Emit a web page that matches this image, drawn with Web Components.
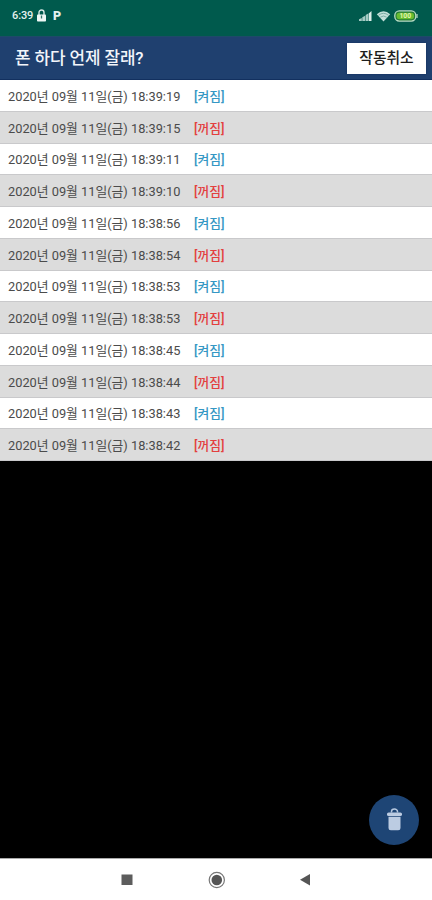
<!DOCTYPE html>
<html lang="ko">
<head>
<meta charset="utf-8">
<title>폰 하다 언제 잘래?</title>
<style>
html,body{margin:0;height:100%;background:#000;overflow:hidden}
body{font-family:Roboto,"Noto Sans CJK KR",sans-serif}
</style>
</head>
<body>
<phone-screen></phone-screen>
<script>
const define=(name,html,init)=>customElements.define(name,class extends HTMLElement{
  constructor(){
    super();
    const t=document.createElement('template');
    t.innerHTML=html;
    this.attachShadow({mode:'open'}).append(t.content.cloneNode(true));
  }
  connectedCallback(){if(init)init(this);}
});

define('status-bar',`<style>
:host{display:flex;align-items:center;height:36px;box-sizing:border-box;padding:0 14px 5px 12px;background:#005a4d;color:#e4f1ee;font-size:11px;font-weight:500}
.time{letter-spacing:-.1px;width:22px;white-space:nowrap}
.lock{margin-left:2px}.p{margin-left:6px;font-weight:900;font-size:12.5px}
.right{margin-left:auto;display:flex;align-items:center}
svg{display:block}
</style>
<span class="time">6:39</span>
<svg class="lock" width="11" height="13" viewBox="0 0 11 13"><path d="M3 6V3.500a2.500 2.500 0 0 1 5 0V6" fill="none" stroke="#d5e8e4" stroke-width="1.400"/><rect x="1" y="5.500" width="9" height="7" rx=".8" fill="#eef7f5"/><path d="M5.500 6.500v3" stroke="#34786d" stroke-width="1.300"/></svg>
<span class="p">P</span>
<div class="right">
<svg width="15" height="12" viewBox="0 0 15 12"><path d="M1 11V9.300L3.800 8v3zM4.300 11V7.300L7.200 5.800V11zM7.700 11V5L10.600 3.300V11z" fill="#a5cbc4"/><path d="M11 11V3.200L13.500 1v10z" fill="#dceeea"/></svg>
<svg style="margin-left:3px" width="15" height="12" viewBox="0 0 15 12"><path d="M.8 4.200Q7.500-1.600 14.200 4.200L7.500 11.500z" fill="#c3e0da"/><path d="M2.500 5.300Q7.500 1.300 12.500 5.300M4.300 7.200Q7.500 4.800 10.700 7.200" fill="none" stroke="#5d988e" stroke-width=".7"/></svg>
<svg style="margin-left:3px" width="24" height="12" viewBox="0 0 24 12"><rect x=".8" y=".9" width="21" height="10.200" rx="4.500" fill="#237a35" stroke="#b9dcc5" stroke-width="1.300"/><rect x="2.600" y="2.700" width="17.400" height="6.600" rx="2.800" fill="#69bd31"/><path d="M23 4v4" stroke="#b9dcc5" stroke-width="1.200"/><text x="11.300" y="8.400" font-size="6.800" font-weight="700" text-anchor="middle" fill="#e4f6ae">100</text></svg>
</div>`);

define('app-bar',`<style>
:host{display:flex;align-items:center;justify-content:space-between;height:44px;box-sizing:border-box;padding:0 6px 0 15px;background:#1f406f;border-top:1px solid #1d4a68;border-bottom:1px solid #12305f;color:#f2f5fa;font-size:16.900px;font-weight:500}
.title{white-space:nowrap;letter-spacing:-.1px;line-height:24px}
</style><div class="title"><slot></slot></div><slot name="action"></slot>`);

define('cancel-button',`<style>
:host{display:block}
button{display:block;width:79px;height:31px;margin:0;padding:0;border:0;background:#fff;color:#1d1d1d;font:500 14.800px/31px Roboto,"Noto Sans CJK KR",sans-serif;box-shadow:0 0 2px #102d5a;white-space:nowrap}
</style><button><slot></slot></button>`);

define('log-row',`<style>
:host{display:flex;align-items:center;flex:1;min-height:0;box-sizing:border-box;padding:3px 0 0 8px;background:#fff;border-bottom:1px solid #c9c9cb;color:#4b4b4b;font-size:12.800px;line-height:18px;white-space:nowrap}
:host([state="off"]){background:#dcdcdc}
.date{width:186px}
.state{color:#3597c4;font-weight:500}
:host([state="off"]) .state{color:#e3403f}
</style><span class="date"></span><span class="state"></span>`,el=>{
  el.shadowRoot.querySelector('.date').textContent='2020년 09월 11일(금) '+el.getAttribute('time');
  el.shadowRoot.querySelector('.state').textContent=el.getAttribute('state')==='off'?'[꺼짐]':'[켜짐]';
});

define('log-list',`<style>:host{display:flex;flex-direction:column;height:381px}</style><slot></slot>`,el=>{
  ['18:39:19','18:39:15','18:39:11','18:39:10','18:38:56','18:38:54','18:38:53','18:38:53','18:38:45','18:38:44','18:38:43','18:38:42'].forEach((t,i)=>{
    const r=document.createElement('log-row');
    r.setAttribute('time',t);
    r.setAttribute('state',i%2?'off':'on');
    el.append(r);
  });
});

define('delete-fab',`<style>
:host{position:absolute;right:13px;bottom:55px;width:50px;height:50px;border-radius:50%;background:#1e4575;display:flex;align-items:center;justify-content:center}
svg{display:block}
</style><svg width="18" height="24" viewBox="0 0 18 24"><path d="M6.500 4.500V3.500a3 2.500 0 0 1 6 0v1" fill="none" stroke="#b5c7df" stroke-width="1.500"/><rect x="2" y="4.500" width="15" height="3.500" rx="1.600" fill="#bccce2"/><path d="M3.500 8.700h12v11.300q0 2.300-2.300 2.300H5.800Q3.500 22.300 3.500 20z" fill="#bccce2"/></svg>`);

define('nav-bar',`<style>
:host{display:block;height:42px;box-sizing:border-box;border-top:1px solid #aaa;background:#fff}
svg{display:block}
</style><svg width="432" height="41" viewBox="0 859 432 41"><rect x="121.500" y="874.500" width="11" height="10.500" fill="#5d5d5d"/><circle cx="216.800" cy="880" r="7.600" fill="#fff" stroke="#777" stroke-width="1.200"/><circle cx="216.800" cy="880" r="5.300" fill="#555"/><path d="M300 879.800L310 874v11.600z" fill="#555"/></svg>`);

define('phone-screen',`<style>
:host{display:flex;flex-direction:column;position:relative;width:432px;height:900px;background:#000;overflow:hidden}
nav-bar{margin-top:auto}
</style>
<status-bar></status-bar>
<app-bar>폰 하다 언제 잘래?<cancel-button slot="action">작동취소</cancel-button></app-bar>
<log-list></log-list>
<delete-fab></delete-fab>
<nav-bar></nav-bar>`);
</script>
</body>
</html>
